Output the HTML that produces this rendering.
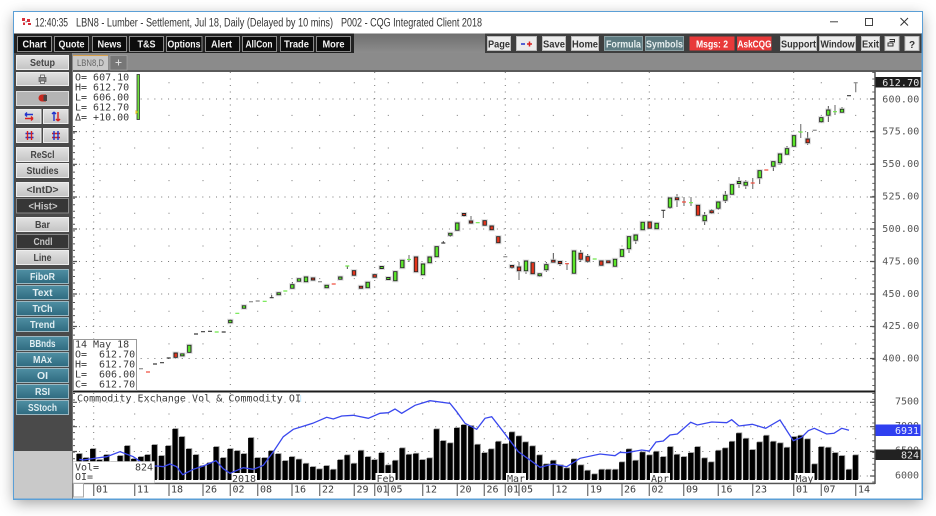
<!DOCTYPE html>
<html><head><meta charset="utf-8"><style>
html,body{margin:0;padding:0;background:#fff;width:936px;height:516px;overflow:hidden}
#win{position:absolute;left:14px;top:12px;width:908px;height:487px;box-shadow:0 4px 14px rgba(0,0,0,.38)}
svg{position:absolute;left:0;top:0;filter:blur(.3px)}
text{font-family:"Liberation Sans",sans-serif}
.m{font-family:"DejaVu Sans Mono","Liberation Mono",monospace;font-size:10px;fill:#3a3a3a}
.b{font-weight:bold;font-size:10px;text-anchor:middle}
.k{fill:#0c0c0c;stroke:#8a8a8a;stroke-width:1}
.w{fill:#f4f4f4}
.l{fill:#d6d6d6;stroke:#f0f0f0;stroke-width:1}
.lt{fill:#444}
.d{fill:#333;stroke:#777;stroke-width:1}
.dt{fill:#c8c8c8}
.t{fill:#3d7c90;stroke:#9cb8c2;stroke-width:1}
.tt{fill:#e0eef2}
.c{fill:#ececec;stroke:#bbb;stroke-width:1}
.ct{fill:#333}
</style></head><body>
<div id="win"></div>
<svg width="936" height="516" viewBox="0 0 936 516" xmlns="http://www.w3.org/2000/svg">
<defs>
<linearGradient id="g1" x1="0" y1="0" x2="0" y2="1"><stop offset="0" stop-color="#6f6f6f"/><stop offset="1" stop-color="#8e8e8e"/></linearGradient>
<linearGradient id="g2" x1="0" y1="0" x2="0" y2="1"><stop offset="0" stop-color="#4f8fa3"/><stop offset="1" stop-color="#2f6b80"/></linearGradient>
<linearGradient id="g3" x1="0" y1="0" x2="0" y2="1"><stop offset="0" stop-color="#e2e2e2"/><stop offset="1" stop-color="#c4c4c4"/></linearGradient>
<filter id="o" filterUnits="userSpaceOnUse" x="0" y="0" width="936" height="516">
<feMorphology in="SourceAlpha" operator="dilate" radius="2" result="h"/>
<feFlood flood-color="#cfcfcf" flood-opacity=".7"/><feComposite in2="h" operator="in" result="hh"/>
<feMorphology in="SourceAlpha" operator="dilate" radius="1" result="d"/>
<feFlood flood-color="#262626"/><feComposite in2="d" operator="in" result="dd"/>
<feMerge><feMergeNode in="hh"/><feMergeNode in="dd"/><feMergeNode in="SourceGraphic"/></feMerge>
</filter>
<path id="v" d="M79 480V454M85.7 480V458M92.7 480V449M99.3 480V460M106.3 480V455M113 480V462M120 480V456M127 480V446M133.7 480V459M140.7 480V457M147.3 480V455M154.3 480V445M161.3 480V456M168 480V446M175 480V429M181.7 480V437M188.7 480V449M195.7 480V455M202.3 480V466M209.3 480V463M216 480V447M223 480V458M230 480V449M237 480V451M243.7 480V454M250.7 480V438M257.3 480V458M264.3 480V458M271 480V451M278 480V454M285 480V461M291.7 480V457M298.7 480V459.5M305.7 480V463.7M312.7 480V467M319.3 480V469.3M326.3 480V466M333 480V469.7M340 480V460M347 480V455.3M353.7 480V463.7M360.7 480V450.7M367.7 480V457M374.3 480V460M381.3 480V453M388 480V465.3M395 480V460.7M402 480V448.3M408.7 480V454.7M415.7 480V453.7M422.3 480V460M429.3 480V458.3M436.3 480V429.3M443 480V441M450 480V443.3M456.7 480V428M463.7 480V425M470.7 480V426M477.3 480V444.7M484.3 480V453M491 480V449.3M498 480V441.7M505 480V444M511.7 480V432.3M518.7 480V436.3M525.3 480V442.3M532.3 480V446.3M539.3 480V455.3M546 480V464.3M553 480V460.7M560 480V465.3M566.7 480V468.3M573.7 480V459.3M580.7 480V465.3M587.3 480V470.7M594.3 480V474.3M601.3 480V469.7M608 480V469.7M615 480V469.7M621.7 480V462.3M628.7 480V449.3M635.3 480V460.7M642.3 480V452.3M649.3 480V455.3M656 480V451.7M663 480V457M670 480V447M676.7 480V454.7M683.7 480V457M690.7 480V453M697.3 480V447M704.3 480V458.3M711 480V462.3M718 480V450.7M725 480V448.3M731.7 480V441.7M738.7 480V433.3M745.7 480V438.7M752.3 480V450M759.3 480V442.3M766 480V435.7M773 480V441.7M780 480V443.3M786.7 480V447.7M793.7 480V437M800.3 480V435.7M807.3 480V439.3M814.3 480V464.3M821 480V447M828 480V447.7M835 480V453M841.7 480V456M848.7 480V469.7M855.3 480V455.3"/>
</defs>

<!-- window frame -->
<rect x="13.5" y="11.5" width="909" height="488" fill="#fff" stroke="#5b9fd6"/>
<rect x="14" y="12" width="908" height="21.5" fill="#fff"/>

<!-- title bar -->
<path fill="#d8303a" d="M22 18h3v3h-3zM27 19h3v3h-3zM23 22.500h2v2.500h-2zM28 23h3v2h-3z"/><path fill="#999" d="M25.500 21h1.500v1.500h-1.500z"/>
<text x="35" y="26.500" font-size="11.500" fill="#333" textLength="33" lengthAdjust="spacingAndGlyphs">12:40:35</text>
<text x="76" y="26.500" font-size="11.500" fill="#333" textLength="257" lengthAdjust="spacingAndGlyphs">LBN8 - Lumber - Settlement, Jul 18, Daily (Delayed by 10 mins)</text>
<text x="341" y="26.500" font-size="11.500" fill="#333" textLength="141" lengthAdjust="spacingAndGlyphs">P002 - CQG Integrated Client 2018</text>
<path d="M830 21.800h8" stroke="#444" fill="none"/>
<rect x="865.500" y="18.500" width="7" height="7" fill="none" stroke="#444"/>
<path d="M900.500 18l7.500 7.500M908 18l-7.500 7.500" stroke="#333" fill="none"/>

<!-- toolbar -->
<rect x="14" y="33.500" width="908" height="20" fill="url(#g1)"/>
<rect x="14" y="33.500" width="340" height="20" fill="#222"/>
<rect x="485" y="33.500" width="437" height="20" fill="#3e3e3e"/>
<rect x="14" y="53" width="908" height="18" fill="#8b8b8b"/>
<rect x="73" y="70" width="849" height="2" fill="#5a5a5a"/>

<rect class="k" x="17.500" y="36.500" width="34" height="15"/><text class="b w" x="34.500" y="47.500" textLength="24" lengthAdjust="spacingAndGlyphs">Chart</text>
<rect class="k" x="54.500" y="36.500" width="34" height="15"/><text class="b w" x="71.500" y="47.500" textLength="26" lengthAdjust="spacingAndGlyphs">Quote</text>
<rect class="k" x="92.500" y="36.500" width="34" height="15"/><text class="b w" x="109.500" y="47.500" textLength="24" lengthAdjust="spacingAndGlyphs">News</text>
<rect class="k" x="129.500" y="36.500" width="34" height="15"/><text class="b w" x="146.500" y="47.500" textLength="18" lengthAdjust="spacingAndGlyphs">T&amp;S</text>
<rect class="k" x="166.500" y="36.500" width="35.500" height="15"/><text class="b w" x="184" y="47.500" textLength="33" lengthAdjust="spacingAndGlyphs">Options</text>
<rect class="k" x="205.500" y="36.500" width="34" height="15"/><text class="b w" x="221.500" y="47.500" textLength="21" lengthAdjust="spacingAndGlyphs">Alert</text>
<rect class="k" x="242.500" y="36.500" width="34" height="15"/><text class="b w" x="259" y="47.500" textLength="27" lengthAdjust="spacingAndGlyphs">AllCon</text>
<rect class="k" x="280.500" y="36.500" width="33" height="15"/><text class="b w" x="296.500" y="47.500" textLength="25" lengthAdjust="spacingAndGlyphs">Trade</text>
<rect class="k" x="316.500" y="36.500" width="34" height="15"/><text class="b w" x="333.500" y="47.500" textLength="22" lengthAdjust="spacingAndGlyphs">More</text>

<rect class="c" x="487.500" y="36.500" width="23" height="14"/><text class="b ct" x="499" y="47.500" textLength="22" lengthAdjust="spacingAndGlyphs">Page</text>
<rect class="c" x="516.500" y="36.500" width="20" height="14"/><path d="M521 44h4" stroke="#2233cc" stroke-width="1.500"/><path d="M527 44h5M529.500 41.500v5" stroke="#d82020" stroke-width="1.500"/>
<rect class="c" x="542.500" y="36.500" width="23" height="14"/><text class="b ct" x="554" y="47.500" textLength="22" lengthAdjust="spacingAndGlyphs">Save</text>
<rect class="c" x="571.500" y="36.500" width="27" height="14"/><text class="b ct" x="585" y="47.500" textLength="26" lengthAdjust="spacingAndGlyphs">Home</text>
<rect x="604.500" y="36.500" width="38" height="14" fill="#5d7a80" stroke="#8aa0a4"/><text class="b" fill="#e6eeee" x="623.500" y="47.500" textLength="35" lengthAdjust="spacingAndGlyphs">Formula</text>
<rect x="645.500" y="36.500" width="38" height="14" fill="#5d7a80" stroke="#8aa0a4"/><text class="b" fill="#e6eeee" x="664.500" y="47.500" textLength="37" lengthAdjust="spacingAndGlyphs">Symbols</text>
<rect x="689.500" y="36.500" width="45" height="14" fill="#e83a3a"/><text class="b" fill="#fff" x="712" y="47.500" textLength="32" lengthAdjust="spacingAndGlyphs">Msgs: 2</text>
<rect x="737" y="36.500" width="34.500" height="14" fill="#e83a3a"/><text class="b" fill="#fff" x="754.500" y="47.500" textLength="34" lengthAdjust="spacingAndGlyphs">AskCQG</text>
<rect class="c" x="780.500" y="36.500" width="36" height="14"/><text class="b ct" x="798.500" y="47.500" textLength="35" lengthAdjust="spacingAndGlyphs">Support</text>
<rect class="c" x="819.500" y="36.500" width="36" height="14"/><text class="b ct" x="837.500" y="47.500" textLength="34" lengthAdjust="spacingAndGlyphs">Window</text>
<rect class="c" x="861.500" y="36.500" width="18" height="14"/><text class="b ct" x="870.500" y="47.500" textLength="17" lengthAdjust="spacingAndGlyphs">Exit</text>
<rect class="c" x="885" y="36.500" width="14" height="14"/><path d="M889.500 41.500h5v-2M888 43h5v3h-5z M889.500 39.500h5v3" fill="none" stroke="#333"/>
<rect class="c" x="905" y="36.500" width="14" height="14"/><text class="b ct" x="912" y="48" font-size="11">?</text>

<!-- tab row -->
<rect x="73" y="55" width="35" height="15" fill="#c9c9c9"/><rect x="73" y="55" width="35" height="1" fill="#d9a04a"/>
<text x="77" y="66" font-size="9" fill="#666" textLength="27" lengthAdjust="spacingAndGlyphs">LBN8,D</text>
<rect x="110" y="55.500" width="17" height="14.500" fill="#777" stroke="#aaa" stroke-width=".6"/><path d="M115.500 62.500h6M118.500 59.500v6" stroke="#ddd" stroke-width="1"/>

<!-- sidebar -->
<rect x="14" y="53" width="58" height="398" fill="#4a4a4a"/>
<rect x="14" y="451" width="58" height="48" fill="#c9c9c9"/>
<rect x="72" y="71" width="1" height="428" fill="#777"/>

<g>
<rect x="16.500" y="55.500" width="52" height="14" fill="url(#g3)" stroke="#eee"/><text class="b lt" x="42.500" y="66" textLength="25" lengthAdjust="spacingAndGlyphs">Setup</text>
<rect x="16.500" y="72.500" width="52" height="13" fill="url(#g3)" stroke="#eee"/><path d="M39 77.500h7v4h-7z" fill="#888" stroke="#555" stroke-width=".7"/><path d="M40.500 75h4v2.500h-4zM40.500 81h4v2.500h-4z" fill="#eee" stroke="#555" stroke-width=".7"/>
<rect x="16.500" y="91.500" width="52" height="14" fill="#b4b4b4" stroke="#ddd"/><path d="M46 94.500h-4a3.500 3.500 0 0 0 0 7h4z" fill="#c8281e"/><rect x="43.500" y="95" width="3.500" height="6" fill="#444"/>
<rect x="16.500" y="109.500" width="24.500" height="14" fill="url(#g3)" stroke="#eee"/><rect x="43.500" y="109.500" width="24.500" height="14" fill="url(#g3)" stroke="#eee"/>
<path d="M25 114.500h8M25 114.500l2-2M25 114.500l2 2" stroke="#2233cc" stroke-width="1.400" fill="none"/><path d="M25 118.500h8M33 118.500l-2-2M33 118.500l-2 2" stroke="#d82020" stroke-width="1.400" fill="none"/>
<path d="M54 112v9M54 112l-2 2M54 112l2 2" stroke="#2233cc" stroke-width="1.400" fill="none"/><path d="M58 112v9M58 121l-2-2M58 121l2-2" stroke="#d82020" stroke-width="1.400" fill="none"/>
<rect x="16.500" y="128.500" width="24.500" height="14" fill="url(#g3)" stroke="#eee"/><rect x="43.500" y="128.500" width="24.500" height="14" fill="url(#g3)" stroke="#eee"/>
<path d="M25.500 133.500h8M25.500 137.500h8" stroke="#2233cc" stroke-width="1.400"/><path d="M27.500 131v9M31.500 131v9" stroke="#d82020" stroke-width="1.400"/>
<path d="M52 133.500h8M52 137.500h8" stroke="#d82020" stroke-width="1.400"/><path d="M54 131v9M58 131v9" stroke="#2233cc" stroke-width="1.400"/>

<rect x="16.500" y="147.500" width="52" height="14" fill="url(#g3)" stroke="#eee"/><text class="b lt" x="42.500" y="158" textLength="24" lengthAdjust="spacingAndGlyphs">ReScl</text>
<rect x="16.500" y="163.500" width="52" height="14" fill="url(#g3)" stroke="#eee"/><text class="b lt" x="42.500" y="174" textLength="32" lengthAdjust="spacingAndGlyphs">Studies</text>
<rect x="16.500" y="182.500" width="52" height="14" fill="url(#g3)" stroke="#eee"/><text class="b lt" x="42.500" y="193" textLength="32" lengthAdjust="spacingAndGlyphs">&lt;IntD&gt;</text>
<rect x="16.500" y="198.500" width="52" height="14.500" fill="#363636" stroke="#888"/><text class="b dt" x="43" y="209.500" textLength="29" lengthAdjust="spacingAndGlyphs">&lt;Hist&gt;</text>
<rect x="16.500" y="217.500" width="52" height="14" fill="url(#g3)" stroke="#eee"/><text class="b lt" x="42.500" y="228" textLength="15" lengthAdjust="spacingAndGlyphs">Bar</text>
<rect x="16.500" y="234.500" width="52" height="14" fill="#363636" stroke="#888"/><text class="b dt" x="43" y="245" textLength="19" lengthAdjust="spacingAndGlyphs">Cndl</text>
<rect x="16.500" y="250.500" width="52" height="14" fill="url(#g3)" stroke="#eee"/><text class="b lt" x="42.500" y="261" textLength="18" lengthAdjust="spacingAndGlyphs">Line</text>

<rect x="16.500" y="269.500" width="52" height="14" fill="url(#g2)" stroke="#9cb8c2"/><text class="b tt" x="42.500" y="280" textLength="25" lengthAdjust="spacingAndGlyphs">FiboR</text>
<rect x="16.500" y="285.500" width="52" height="14" fill="url(#g2)" stroke="#9cb8c2"/><text class="b tt" x="42.500" y="296" textLength="20" lengthAdjust="spacingAndGlyphs">Text</text>
<rect x="16.500" y="301.500" width="52" height="14" fill="url(#g2)" stroke="#9cb8c2"/><text class="b tt" x="42.500" y="312" textLength="20" lengthAdjust="spacingAndGlyphs">TrCh</text>
<rect x="16.500" y="317.500" width="52" height="14" fill="url(#g2)" stroke="#9cb8c2"/><text class="b tt" x="42.500" y="328" textLength="25" lengthAdjust="spacingAndGlyphs">Trend</text>
<rect x="16.500" y="336.500" width="52" height="14" fill="url(#g2)" stroke="#9cb8c2"/><text class="b tt" x="42.500" y="347" textLength="26" lengthAdjust="spacingAndGlyphs">BBnds</text>
<rect x="16.500" y="352.500" width="52" height="14" fill="url(#g2)" stroke="#9cb8c2"/><text class="b tt" x="42.500" y="363" textLength="19" lengthAdjust="spacingAndGlyphs">MAx</text>
<rect x="16.500" y="368.500" width="52" height="14" fill="url(#g2)" stroke="#9cb8c2"/><text class="b tt" x="42.500" y="379" textLength="11" lengthAdjust="spacingAndGlyphs">OI</text>
<rect x="16.500" y="384.500" width="52" height="14" fill="url(#g2)" stroke="#9cb8c2"/><text class="b tt" x="42.500" y="395" textLength="15" lengthAdjust="spacingAndGlyphs">RSI</text>
<rect x="16.500" y="400.500" width="52" height="14" fill="url(#g2)" stroke="#9cb8c2"/><text class="b tt" x="42.500" y="411" textLength="29" lengthAdjust="spacingAndGlyphs">SStoch</text>
</g>

<!-- chart backgrounds -->
<rect x="73" y="72" width="849" height="426" fill="#fff"/>

<!-- grids -->
<g fill="none" stroke="#777" stroke-width="1">
<path stroke-dasharray="1 5.850" d="M79 99H875M79 131.600H875M79 164.300H875M79 197H875M79 229H875M79 261.500H875M79 294H875M79 326.500H875M79 358.500H875M79 402.300H875M79 426.700H875M79 451.500H875M79 476H875"/>
<path stroke-dasharray="1 5.500" d="M93.700 72V391M230.300 72V391M374.700 72V391M505.300 72V391M649.300 72V391M793.700 72V391M93.700 393V480M230.300 393V480M374.700 393V480M505.300 393V480M649.300 393V480M793.700 393V480"/>
<path stroke-dasharray="1 31.650" transform="translate(0 0)" stroke-width="1" d="M100 82.200V376M134.700 82.200V376M169 82.200V376M203 82.200V376M257.700 82.200V376M292 82.200V376M319.700 82.200V376M354.300 82.200V376M388.300 82.200V376M422.700 82.200V376M457.300 82.200V376M484.300 82.200V376M519 82.200V376M553.300 82.200V376M587.700 82.200V376M622 82.200V376M683.700 82.200V376M718.300 82.200V376M752.700 82.200V376M821.300 82.200V376M855.700 82.200V376"/>
<path stroke-dasharray="1 23.700" d="M134.700 413.500V470M169 413.500V470M203 413.500V470M257.700 413.500V470M292 413.500V470M319.700 413.500V470M354.300 413.500V470M388.300 413.500V470M422.700 413.500V470M457.300 413.500V470M484.300 413.500V470M519 413.500V470M553.300 413.500V470M587.700 413.500V470M622 413.500V470M683.700 413.500V470M718.300 413.500V470M752.700 413.500V470M821.300 413.500V470M855.700 413.500V470"/>
</g>

<!-- left / right ticks -->
<g fill="none" stroke="#555">
<path stroke-width="2" stroke-dasharray="1 5.520" d="M74 126V391M74 393V483"/>
<path stroke-width="1.200" d="M73 131.600h4M73 164.300h4M73 197h4M73 229h4M73 261.500h4M73 294h4M73 326.500h4M73 402.300h4M73 426.700h4M73 451.500h4M73 476h4"/>
<path stroke-width="2.500" stroke="#666" stroke-dasharray="1 5.520" d="M873.500 72V391"/>
<path stroke-width="2.500" stroke="#666" stroke-dasharray="1 4.900" d="M873.500 393V483"/>
<path stroke-width="1.200" d="M870 99h5M870 131.600h5M870 164.300h5M870 197h5M870 229h5M870 261.500h5M870 294h5M870 326.500h5M870 358.500h5M870 402.300h5M870 426.700h5M870 451.500h5M870 476h5"/>
<path stroke-width="1.500" d="M875 72V484"/>
</g>

<!-- wicks -->
<path fill="none" stroke="#3c3c3c" stroke-width=".9" d="M271.700 295V298M292.300 282V284M347.300 266V269M443.300 241V243M450.300 235V237M464 215V217M512 267V269M539.700 275V277M546.300 262V272M553.300 253V262M560 263V266M580.700 250V262M587.700 254V263M663.300 210V218M670 207V209M704.700 212V225M711.700 209V214M718.300 208V210M725.300 191V203M759.700 178V184M773.300 166V171M780 163V165M787 146V148M807.700 132V145M821.300 122V123M828.300 106V122M842 107V109"/>
<path fill="none" stroke="#888" stroke-width="1.300" d="M409 255V262M471 216V224M519 262V280M526 271V274M567 263V270M629 249V253M635.700 240V244M677 194V207M684 197V206M691 197V206M739 177V188M745.700 180V189M752.700 178V189M800.700 124V138M835 105V115M855.700 82.700V92.300"/>

<!-- dashes -->
<path fill="none" stroke="#3a3a3a" stroke-width="1.200" d="M153 364h4M160 362.700h4M166.700 358h4M194 334h4M201 331.700h4M208 331.300h4M221.700 332h4M269.700 297.700h4M441.300 243h4M661.300 210.300h4M847 95.700h4"/>
<path fill="none" stroke="#9a9a9a" stroke-width="1.400" d="M139 368.700h4M249 301.700h4M255.700 301h4M318 281.700h4M503.300 256.700h4M812.700 130.300h4M853.700 82.700h4"/>
<path fill="none" stroke="#6fe84a" stroke-width="1.200" d="M214.700 332h4M235.300 313.300h4M262.700 301.300h4M283.300 291h4M345.300 266h4M407 259.500h4M475.700 222.700h4M592.700 259h4M689 202.700h4M833 111.700h4M798.700 132h4"/>
<path fill="none" stroke="#f05040" stroke-width="1.200" d="M146 372h4M331.700 284h4M565 263.700h4M682 202h4M750.700 183h4M764.300 170h4"/>

<!-- bodies -->
<g filter="url(#o)" fill="none" stroke-width="2.400">
<path stroke="#5ce62c" d="M182.300 354.400V355.400M189.300 345.800V351.900M230.300 320.800V322.200M244 306.300V307.700M278.700 293.300V294.300M292.300 285.100V287.700M299 279.300V280.700M306 277.500V281.200M326.700 285.800V287.200M340.300 277.500V278.700M367.700 282.800V287.200M381.700 267V268M388.300 278V279M395.300 272.100V280.200M402.300 260.800V267.200M423 264.500V274.200M429.700 257.500V262.200M436.700 247.100V256.200M450.300 233.800V234.800M457.300 223.500V229.700M526 261.500V270.200M539.700 274.300V275.300M546.300 265.100V269.200M574 251.500V272.700M615 259.800V265.700M622 250.100V255.900M629 237.100V248.200M635.700 235.500V239.700M642.700 222.800V229.200M656.700 223.800V228.200M670 198.500V206.700M704.700 216.100V220.200M718.300 202.500V207.700M725.300 195.800V199.700M732 185.100V193.700M739 182V183M745.700 182.800V184.700M759.700 171.100V177.200M773.300 162.100V165.700M780 154.500V162.200M787 149.100V153.700M794 136.100V145.700M821.300 118.100V121.200M828.300 110.500V114.700M842 109.800V111.700"/>
<path stroke="#e2341e" d="M175.700 353.500V356.900M313 278.500V279.500M354 271.100V274.700M361 286.700V287.700M374.700 275.100V276.700M416 257.500V271.200M464 214V215M471 221.500V222.500M484.700 221.100V224.700M491.700 226.500V229.200M498.300 237.100V242.200M512 266V266.800M519 267.500V270.200M532.700 263.100V273.200M553.300 260.800V261.600M560 262V263M580.700 253.800V258.700M587.700 257.100V260.700M601.300 261.500V264.700M608.300 261.400V262.200M649.700 222.500V227.700M677 198.300V199.200M698 205.800V214.700M711.700 211.300V212.300M807.700 139.500V142.200"/>
</g>

<!-- volume bars and OI -->
<use href="#v" x=".7" y="-.8" fill="none" stroke="#8c8c8c" stroke-width="5.600"/>
<use href="#v" fill="none" stroke="#000" stroke-width="5.200"/>
<path fill="none" stroke="#3a48ee" stroke-width="1.300" d="M79.300 459.300L83.300 460 96.700 458 106.700 456.700 120 451.700 133.300 456.700 146.700 466 156.700 466 163.300 466.700 170 464 176.700 466.700 182.700 474.700 193.300 469.300 203.300 466 216 460.700 223.300 468.700 230 473.300 243.300 467.700 253.300 469.300 263.300 465.300 273.300 451.700 283.300 436.700 293.300 429.300 300 427.300 312.700 423.300 326.700 417.300 333.300 419 341.700 416 353.300 415.300 368.300 418.300 380 413.300 388.300 412.700 395 409 401.700 413.300 415 405.300 430 400.700 450 403.300 456.700 411.700 465 423.300 476.700 429.300 485 418.300 491.700 416.700 503.300 431.700 518.300 451.700 540 467.300 553.300 464 566.700 466.700 580 458.300 600 454 615 455.700 620 452.300 626.700 452.700 641.700 450 649.300 451 656 442 663.300 441 670 435 677.300 434 690.700 422.300 697.300 425 711.700 422 726.700 422.700 731.700 419.700 739 426 752.300 424.300 765.700 428.300 780 420 793.300 440.700 801.700 437.300 808.300 430.700 814.300 428.300 826.700 434 834 433.300 841.700 428.300 849 430.300"/>

<!-- panel frames -->
<rect x="73" y="390.500" width="802" height="2" fill="#1c1c1c"/>
<rect x="73" y="482.700" width="802" height="1.500" fill="#555"/>

<!-- top-left quote box -->
<rect x="75" y="72" width="62" height="51" fill="#fff"/>
<text class="m" x="75" y="80.700">O= 607.10</text>
<text class="m" x="75" y="90.700">H= 612.70</text>
<text class="m" x="75" y="100.700">L= 606.00</text>
<text class="m" x="75" y="110.700">L= 612.70</text>
<text class="m" x="75" y="120.500">Δ= +10.00</text>
<rect x="137" y="74.500" width="2.500" height="45" fill="#6fe03c" stroke="#333" stroke-width=".8"/>
<path d="M135.500 110l2.500 2-2.500 2.500z" fill="#e8c020"/>

<!-- bottom-left cursor box -->
<rect x="73.500" y="339.500" width="63" height="51" fill="#fff" stroke="#999"/>
<text class="m" x="75" y="347.500">14 May 18</text>
<text class="m" x="75" y="357.500">O=</text><text class="m" x="99" y="357.500">612.70</text>
<text class="m" x="75" y="367.500">H=</text><text class="m" x="99" y="367.500">612.70</text>
<text class="m" x="75" y="377.500">L=</text><text class="m" x="99" y="377.500">606.00</text>
<text class="m" x="75" y="387.500">C=</text><text class="m" x="99" y="387.500">612.70</text>

<!-- volume title -->
<text class="m" x="77" y="401.700" textLength="224">Commodity Exchange Vol &amp; Commodity OI</text>
<rect x="300" y="395" width="1.200" height="7" fill="#cfeeff"/>

<!-- vol box -->
<rect x="73" y="461.500" width="81.500" height="21.500" fill="#fff" stroke="#bbb" stroke-width=".6"/>
<text class="m" x="75" y="470.500">Vol=</text><text class="m" x="135" y="470.500">824</text>
<text class="m" x="75" y="480">OI=</text>

<!-- month labels -->
<g>
<rect x="231.500" y="473" width="25.500" height="9.500" fill="#fff"/><text class="m" x="232" y="481.800">2018</text>
<rect x="375.500" y="473" width="20" height="9.500" fill="#fff"/><text class="m" x="376.500" y="481.800">Feb</text>
<rect x="506" y="473" width="20" height="9.500" fill="#fff"/><text class="m" x="507" y="481.800">Mar</text>
<rect x="650" y="473" width="20" height="9.500" fill="#fff"/><text class="m" x="651" y="481.800">Apr</text>
<rect x="794.500" y="473" width="20" height="9.500" fill="#fff"/><text class="m" x="795.500" y="481.800">May</text>
</g>

<!-- date axis -->
<path fill="none" stroke="#777" stroke-width="1.300" d="M93.700 484V496M134.700 484V496M169 484V496M203 484V496M230.300 484V496M257.700 484V496M292 484V496M319.700 484V496M354.300 484V496M374.700 484V496M388.300 484V496M422.700 484V496M457.300 484V496M484.300 484V496M505.300 484V496M519 484V496M553.300 484V496M587.700 484V496M622 484V496M649.300 484V496M683.700 484V496M718.300 484V496M752.700 484V496M793.700 484V496M821.300 484V496M855.700 484V496"/>
<rect x="73.500" y="483.500" width="10" height="13.500" fill="#fff" stroke="#aaa"/>
<g>
<text class="m" x="96" y="492.600">01</text><text class="m" x="137" y="492.600">11</text><text class="m" x="171" y="492.600">18</text><text class="m" x="205" y="492.600">26</text><text class="m" x="232.500" y="492.600">02</text><text class="m" x="260" y="492.600">08</text><text class="m" x="294" y="492.600">16</text><text class="m" x="322" y="492.600">22</text><text class="m" x="356.500" y="492.600">29</text><text class="m" x="376.500" y="492.600">01</text><text class="m" x="390.500" y="492.600">05</text><text class="m" x="425" y="492.600">12</text><text class="m" x="459.500" y="492.600">20</text><text class="m" x="486.500" y="492.600">26</text><text class="m" x="507" y="492.600">01</text><text class="m" x="521" y="492.600">05</text><text class="m" x="555.500" y="492.600">12</text><text class="m" x="590" y="492.600">19</text><text class="m" x="624" y="492.600">26</text><text class="m" x="651.500" y="492.600">02</text><text class="m" x="686" y="492.600">09</text><text class="m" x="720.500" y="492.600">16</text><text class="m" x="755" y="492.600">23</text><text class="m" x="796" y="492.600">01</text><text class="m" x="823.500" y="492.600">07</text><text class="m" x="858" y="492.600">14</text>
</g>

<!-- right axis -->
<rect x="875.500" y="77" width="45" height="10.500" fill="#1c1c1c"/>
<text class="m" x="882.300" y="85.800" textLength="37" style="fill:#e8e8e8">612.70</text>
<g style="font-size:10px">
<text class="m" x="882.300" y="102.400" textLength="37" style="fill:#555">600.00</text>
<text class="m" x="882.300" y="134.400" textLength="37" style="fill:#555">575.00</text>
<text class="m" x="882.300" y="167" textLength="37" style="fill:#555">550.00</text>
<text class="m" x="882.300" y="199.500" textLength="37" style="fill:#555">525.00</text>
<text class="m" x="882.300" y="232" textLength="37" style="fill:#555">500.00</text>
<text class="m" x="882.300" y="264.500" textLength="37" style="fill:#555">475.00</text>
<text class="m" x="882.300" y="297" textLength="37" style="fill:#555">450.00</text>
<text class="m" x="882.300" y="329" textLength="37" style="fill:#555">425.00</text>
<text class="m" x="882.300" y="361.500" textLength="37" style="fill:#555">400.00</text>
<text class="m" x="895" y="404.500" textLength="24" style="fill:#555">7500</text>
<text class="m" x="895" y="429" textLength="24" style="fill:#555">7000</text>
<text class="m" x="895" y="453.500" textLength="24" style="fill:#555">6500</text>
<text class="m" x="895" y="478.500" textLength="24" style="fill:#555">6000</text>
</g>
<rect x="875.500" y="424.500" width="45" height="11.500" fill="#2f3ff0"/>
<text class="m" x="895" y="434" textLength="24" style="fill:#e8ecff">6931</text>
<rect x="875.500" y="449.500" width="45" height="10.500" fill="#222"/>
<text class="m" x="901" y="458.300" textLength="18" style="fill:#e4e4e4">824</text>

<rect x="921.500" y="33" width="1" height="466" fill="#5b9fd6"/>
<rect x="14" y="498.500" width="908" height="1" fill="#5b9fd6"/>
</svg>
</body></html>
